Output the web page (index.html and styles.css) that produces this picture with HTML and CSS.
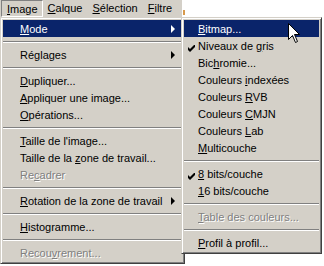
FILE: index.html
```html
<!DOCTYPE html>
<html lang="fr">
<head>
    <meta charset="UTF-8">
    <title>Menu Image</title>
    <link rel="stylesheet" href="styles.css">
</head>
<body>
    <div class="screen">
        <!-- barre de menus -->
        <div class="menubar">
            <span class="menubar-item pressed"><u>I</u>mage</span>
            <span class="menubar-item"><u>C</u>alque</span>
            <span class="menubar-item"><u>S</u>élection</span>
            <span class="menubar-item"><u>F</u>iltre</span>
        </div>
        <span class="desk-mark"></span>

        <!-- menu Image -->
        <div class="menu main-menu">
            <div class="item selected"><span class="mark"></span><span class="label"><u>M</u>ode</span><span class="arrow"></span></div>
            <div class="separator"></div>
            <div class="item"><span class="mark"></span><span class="label">Ré<u>g</u>lages</span><span class="arrow"></span></div>
            <div class="separator"></div>
            <div class="item"><span class="mark"></span><span class="label"><u>D</u>upliquer...</span></div>
            <div class="item"><span class="mark"></span><span class="label"><u>A</u>ppliquer une image...</span></div>
            <div class="item"><span class="mark"></span><span class="label"><u>O</u>pérations...</span></div>
            <div class="separator"></div>
            <div class="item"><span class="mark"></span><span class="label"><u>T</u>aille de l'image...</span></div>
            <div class="item"><span class="mark"></span><span class="label">Taille de la <u>z</u>one de travail...</span></div>
            <div class="item disabled"><span class="mark"></span><span class="label">Re<u>c</u>adrer</span></div>
            <div class="separator"></div>
            <div class="item"><span class="mark"></span><span class="label"><u>R</u>otation de la zone de travail</span><span class="arrow"></span></div>
            <div class="separator"></div>
            <div class="item"><span class="mark"></span><span class="label"><u>H</u>istogramme...</span></div>
            <div class="separator"></div>
            <div class="item disabled"><span class="mark"></span><span class="label">Recou<u>v</u>rement...</span></div>
        </div>

        <!-- sous-menu Mode -->
        <div class="menu sub-menu">
            <div class="item selected"><span class="mark"></span><span class="label"><u>B</u>itmap...</span></div>
            <div class="item"><span class="mark"><svg class="check" width="7" height="7" viewBox="0 0 7 7"><path d="M0 2 L2 4 L7 -1 L7 2 L2 7 L0 5 Z"/></svg></span><span class="label">Niveaux de <u>g</u>ris</span></div>
            <div class="item"><span class="mark"></span><span class="label">Bic<u>h</u>romie...</span></div>
            <div class="item"><span class="mark"></span><span class="label">Couleurs <u>i</u>ndexées</span></div>
            <div class="item"><span class="mark"></span><span class="label">Couleurs <u>R</u>VB</span></div>
            <div class="item"><span class="mark"></span><span class="label">Couleurs <u>C</u>MJN</span></div>
            <div class="item"><span class="mark"></span><span class="label">Couleurs <u>L</u>ab</span></div>
            <div class="item"><span class="mark"></span><span class="label"><u>M</u>ulticouche</span></div>
            <div class="separator"></div>
            <div class="item"><span class="mark"><svg class="check" width="7" height="7" viewBox="0 0 7 7"><path d="M0 2 L2 4 L7 -1 L7 2 L2 7 L0 5 Z"/></svg></span><span class="label"><u>8</u> bits/couche</span></div>
            <div class="item"><span class="mark"></span><span class="label"><u>1</u>6 bits/couche</span></div>
            <div class="separator"></div>
            <div class="item disabled"><span class="mark"></span><span class="label"><u>T</u>able des couleurs...</span></div>
            <div class="separator"></div>
            <div class="item"><span class="mark"></span><span class="label"><u>P</u>rofil à profil...</span></div>
        </div>

        <!-- pointeur de la souris -->
        <svg class="cursor" width="13" height="22" viewBox="0 0 13 22">
            <polygon points="0.5,0.5 0.5,16.5 4.5,12.5 7.5,19.5 9.5,18.5 6.5,11.5 11.5,11.5" fill="#fff" stroke="#000"/>
        </svg>
    </div>
</body>
</html>
```

FILE: styles.css
```css
/* page de base */
body {
    margin: 0;
    background: #fff;
    font-family: "Liberation Sans", Arial, sans-serif;
    font-size: 11px;
    color: #000;
}

.screen {
    position: relative;
    width: 324px;
    height: 266px;
    overflow: hidden;
}

/* barre de menus */
.menubar {
    display: flex;
    width: 181px;
    height: 17px;
    padding-left: 1px;
    background: #d4d0c8;
}

.menubar-item {
    height: 17px;
    padding: 0 5px;
    line-height: 17px;
    box-sizing: border-box;
}

.menubar-item.pressed {
    border: 1px solid;
    border-color: #808080 #fff #fff #808080;
    padding: 0 4px 0 5px;
    line-height: 16px;
}

.desk-mark {
    position: absolute;
    left: 183px;
    top: 10px;
    width: 2px;
    height: 5px;
    background: #d89a4c;
}

/* menus déroulants */
.menu {
    background: #d4d0c8;
    border: 1px solid;
    border-color: #d4d0c8 #404040 #404040 #d4d0c8;
    box-shadow: inset 1px 1px #fff, inset -1px -1px #808080;
    padding: 2px;
    box-sizing: border-box;
}

.main-menu {
    width: 185px;
}

.sub-menu {
    position: absolute;
    left: 181px;
    top: 17px;
    width: 141px;
}

.item {
    display: flex;
    align-items: center;
    height: 17px;
    white-space: nowrap;
}

.item .mark {
    flex: none;
    width: 17px;
}

.sub-menu .item .mark {
    width: 14px;
}

.item.selected {
    background: #0a246a;
    color: #fff;
}

.item.disabled {
    color: #808080;
    text-shadow: 1px 1px 0 #fff;
}

.check {
    display: block;
    margin: 6px 0 0 4px;
    fill: #000;
}

.arrow {
    margin-left: auto;
    margin-right: 7px;
    width: 0;
    height: 0;
    border-left: 4px solid currentColor;
    border-top: 4px solid transparent;
    border-bottom: 4px solid transparent;
}

.separator {
    height: 1px;
    margin: 4px 0 3px;
    background: #808080;
    border-bottom: 1px solid #fff;
}

.cursor {
    position: absolute;
    left: 288px;
    top: 23px;
}
```
